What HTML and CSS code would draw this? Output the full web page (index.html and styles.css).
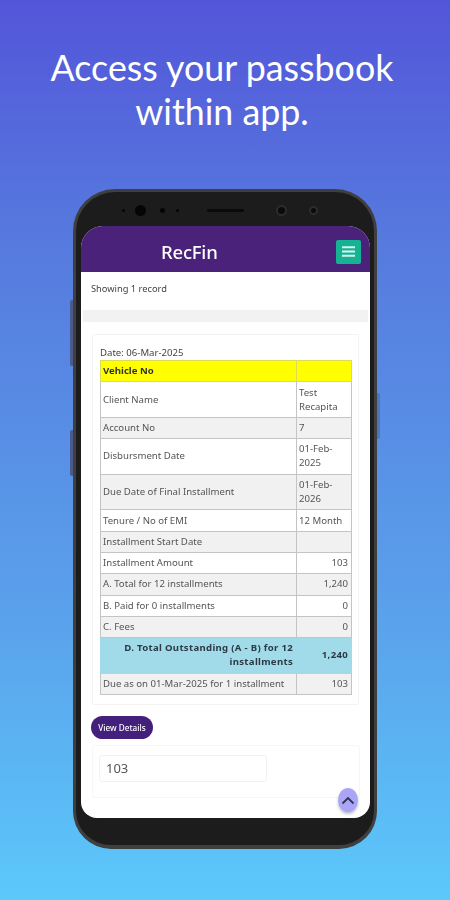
FILE: index.html
```html
<!DOCTYPE html>
<html lang="en">
<head>
<meta charset="utf-8">
<title>RecFin</title>
<link rel="stylesheet" href="styles.css">
</head>
<body>
<main class="page">
  <h1 class="headline">Access your passbook<br>within app.</h1>
  <div class="phone">
    <span class="side-btn side-a"></span>
    <span class="side-btn side-b"></span>
    <span class="side-btn side-c"></span>
    <div class="bezel-top">
      <span class="dot d1"></span>
      <span class="cam c1"></span>
      <span class="dot d2"></span>
      <span class="dot d3"></span>
      <span class="speaker"></span>
      <span class="cam c2"></span>
      <span class="cam c3"></span>
    </div>
    <div class="screen">
      <header class="appbar">
        <span class="brand">RecFin</span>
        <button class="menu" aria-label="Menu">
          <svg width="13" height="11" viewBox="0 0 13 11"><path d="M0 1.2h13M0 5.5h13M0 9.8h13" stroke="#d8f5ee" stroke-width="2"/></svg>
        </button>
      </header>
      <div class="showing">Showing 1 record</div>
      <div class="band"></div>
      <section class="card">
        <div class="date">Date: 06-Mar-2025</div>
        <table class="ledger">
          <tr class="h21 yellow"><th>Vehicle No</th><th></th></tr>
          <tr class="h36"><td>Client Name</td><td>Test Recapita</td></tr>
          <tr class="h21 alt"><td>Account No</td><td>7</td></tr>
          <tr class="h36"><td>Disbursment Date</td><td>01-Feb-2025</td></tr>
          <tr class="h36 alt"><td>Due Date of Final Installment</td><td>01-Feb-2026</td></tr>
          <tr class="h21"><td>Tenure / No of EMI</td><td>12 Month</td></tr>
          <tr class="h21 alt"><td>Installment Start Date</td><td></td></tr>
          <tr class="h21"><td>Installment Amount</td><td class="num">103</td></tr>
          <tr class="h21 alt"><td>A. Total for 12 installments</td><td class="num">1,240</td></tr>
          <tr class="h21"><td>B. Paid for 0 installments</td><td class="num">0</td></tr>
          <tr class="h21 alt"><td>C. Fees</td><td class="num">0</td></tr>
          <tr class="h36 blue"><th class="num">D. Total Outstanding (A - B) for 12 installments</th><th class="num">1,240</th></tr>
          <tr class="h21 alt"><td>Due as on 01-Mar-2025 for 1 installment</td><td class="num">103</td></tr>
        </table>
      </section>
      <button class="details">View Details</button>
      <section class="amount-card">
        <div class="amount-field">103</div>
      </section>
      <button class="to-top" aria-label="Back to top">
        <svg width="14" height="9" viewBox="0 0 14 9"><path d="M1.5 7.5 7 2l5.5 5.5" fill="none" stroke="#33335a" stroke-width="1.8"/></svg>
      </button>
    </div>
  </div>
</main>
</body>
</html>
```
FILE: styles.css
```css
* { box-sizing: border-box; }
html, body { margin: 0; height: 100%; }
body {
  width: 450px;
  height: 900px;
  overflow: hidden;
  background: linear-gradient(180deg, #5355d9 0%, #5678de 25%, #5aa3ec 70%, #5cc8fa 100%);
  font-family: "Lato", "Noto Sans", sans-serif;
}
.page {
  display: flex;
  flex-direction: column;
  align-items: center;
  padding-top: 46px;
}
.headline {
  margin: 0;
  padding-right: 6px;
  color: #fff;
  font-family: "Lato", sans-serif;
  font-weight: 400;
  font-size: 35.8px;
  line-height: 44px;
  text-align: center;
}
.phone {
  position: relative;
  width: 304px;
  height: 660px;
  margin-top: 55px;
  padding: 0 0 0 5px;
  background: #1c1c1c;
  border: 3px solid #3f3f3f;
  border-bottom-width: 4px;
  border-radius: 42px 42px 38px 38px;
  display: flex;
  flex-direction: column;
}
.side-btn {
  position: absolute;
  width: 3px;
  background: #4a5a8e;
}
.side-a { left: -6px; top: 108px; height: 66px; border-radius: 2px 0 0 2px; }
.side-b { left: -6px; top: 238px; height: 46px; border-radius: 2px 0 0 2px; }
.side-c { right: -6px; top: 201px; height: 46px; border-radius: 0 2px 2px 0; background: #4b76b8; }
.bezel-top {
  position: relative;
  flex: none;
  height: 34px;
}
.dot, .cam, .speaker { position: absolute; background: #050505; }
.dot { width: 3px; height: 3px; border-radius: 50%; top: 17px; }
.d1 { left: 41px; }
.d2 { left: 79px; width: 5px; height: 5px; top: 16px; }
.d3 { left: 95px; }
.cam { border-radius: 50%; }
.c1 { left: 54px; top: 13px; width: 11px; height: 11px; }
.c2 { left: 195px; top: 13px; width: 11px; height: 11px; background: #0a0a0a; border: 2px solid #2c2c2c; }
.c3 { left: 228px; top: 14px; width: 9px; height: 9px; background: #0a0a0a; border: 2px solid #2c2c2c; }
.speaker { left: 126px; top: 17px; width: 37px; height: 3px; border-radius: 2px; background: #0a0a0a; }
.screen {
  position: relative;
  width: 289px;
  height: 592px;
  background: #fff;
  border-radius: 22px 22px 16px 16px;
  overflow: hidden;
  filter: blur(.35px);
}
.appbar {
  height: 46px;
  background: #4b2279;
  display: flex;
  align-items: center;
  justify-content: space-between;
  padding: 5px 9px 0 80px;
}
.brand {
  color: #fff;
  font-family: "Noto Sans", sans-serif;
  font-weight: 500;
  font-size: 18.5px;
  letter-spacing: -0.2px;
}
.menu {
  width: 25px;
  height: 24px;
  padding: 0;
  border: 0;
  border-radius: 2px;
  background: #15b394;
  display: flex;
  align-items: center;
  justify-content: center;
}
.showing {
  height: 38px;
  padding: 11px 0 0 10px;
  font-family: "Noto Sans", sans-serif;
  font-size: 9.3px;
  line-height: 12px;
  color: #444;
}
.band {
  height: 12px;
  margin: 0 2px;
  background: #f2f2f3;
}
.card {
  margin: 12px 11px 0;
  height: 371px;
  padding: 11px 7px 0 7px;
  border: 1px solid #f3f3f3;
  border-radius: 2px;
}
.date {
  height: 14px;
  font-family: "Noto Sans", sans-serif;
  font-size: 9.6px;
  line-height: 13px;
  color: #444;
}
.ledger {
  width: 252px;
  border-collapse: collapse;
  table-layout: fixed;
  font-family: "Noto Sans", sans-serif;
  font-size: 9.6px;
  line-height: 14px;
  color: #555;
}
.ledger td, .ledger th {
  padding: 0 3px 0 2px;
  border: 1px solid #c4c4c4;
  text-align: left;
  font-weight: 400;
}
.ledger td:first-child, .ledger th:first-child { width: 196px; }
.ledger .num { text-align: right; }
.h21 { height: 21.3px; }
.h36 { height: 35.6px; }
.alt td { background: #f1f1f1; }
.yellow th { background: #ffff00; color: #333; font-weight: 700; border-color: #dcdc50; }
.blue th { background: #a1dbe9; color: #2b3a44; font-weight: 700; letter-spacing: .3px; border-color: #a1dbe9; }
.details {
  display: block;
  width: 62px;
  height: 23px;
  margin: 11px 0 0 10px;
  padding: 0;
  border: 0;
  border-radius: 12px;
  background: #43207c;
  color: #fff;
  font-family: "Noto Sans", sans-serif;
  font-size: 8.2px;
  font-weight: 500;
}
.amount-card {
  margin: 6px 10px 0 11px;
  height: 53px;
  padding: 9px 0 0 6px;
  border: 1px solid #f6f6f6;
  border-radius: 3px;
}
.amount-field {
  width: 168px;
  height: 27px;
  padding-left: 6px;
  border: 1px solid #f2f2f2;
  border-radius: 3px;
  font-family: "Noto Sans", sans-serif;
  font-size: 13px;
  line-height: 25px;
  color: #555;
}
.to-top {
  position: absolute;
  right: 12px;
  bottom: 6px;
  width: 20px;
  height: 24px;
  padding: 0;
  border: 0;
  border-radius: 50%;
  background: #aaa6f5;
  box-shadow: 0 2px 3px rgba(60, 60, 120, .35);
  display: flex;
  align-items: center;
  justify-content: center;
}
```
